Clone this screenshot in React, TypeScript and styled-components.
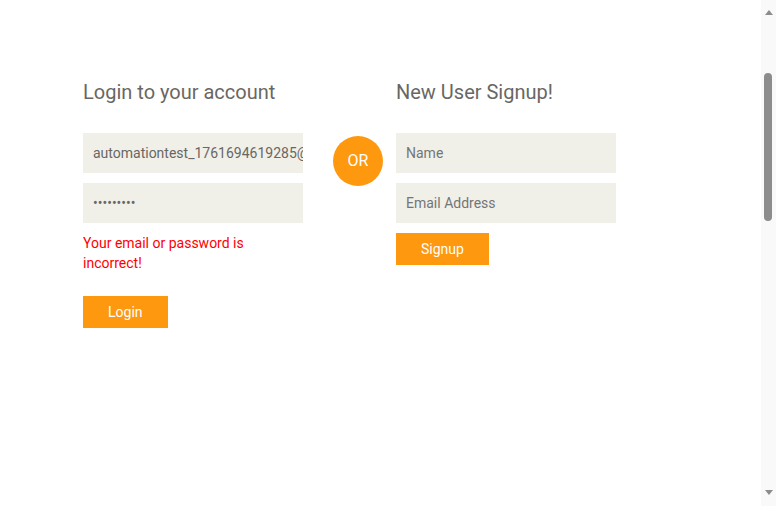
import React from "react";
import styled, { createGlobalStyle } from "styled-components";

const GlobalStyle = createGlobalStyle`
  html, body {
    margin: 0;
    padding: 0;
    background: #ffffff;
    font-family: Roboto, "Liberation Sans", sans-serif;
    overflow: hidden;
  }
  * { box-sizing: border-box; }
`;

const Page = styled.div`
  height: 100vh;
  padding-top: 81px;
`;

const FormSection = styled.section`
  display: flex;
  align-items: flex-start;
  padding-left: 83px;
`;

const FormColumn = styled.div`
  width: 220px;
`;

const Heading = styled.h2`
  margin: 0 0 30px;
  color: #696763;
  font-family: Roboto, "Liberation Sans", sans-serif;
  font-size: 20px;
  font-weight: 400;
  line-height: 22px;
`;

const Form = styled.form`
  display: flex;
  flex-direction: column;
`;

const Input = styled.input`
  display: block;
  width: 100%;
  height: 40px;
  margin: 0 0 10px;
  padding: 0 0 0 10px;
  background: #f0f0e9;
  border: none;
  outline: none;
  color: #696763;
  font-family: Roboto, "Liberation Sans", sans-serif;
  font-size: 14px;
  font-weight: 400;
  &::placeholder {
    color: #757575;
  }
`;

const ErrorText = styled.p`
  margin: 0 0 23px;
  color: #ff0000;
  font-size: 14px;
  line-height: 20px;
`;

const Button = styled.button`
  display: block;
  align-self: flex-start;
  padding: 6px 25px;
  background: #fe980f;
  border: none;
  border-radius: 0;
  color: #ffffff;
  font-family: Roboto, "Liberation Sans", sans-serif;
  font-size: 14px;
  font-weight: 400;
  line-height: 20px;
  cursor: pointer;
`;

const Or = styled.div`
  flex: none;
  width: 50px;
  height: 50px;
  margin: 55px 13px 0 30px;
  border-radius: 50%;
  background: #fe980f;
  color: #ffffff;
  font-size: 16px;
  line-height: 50px;
  text-align: center;
`;

const ScrollTrack = styled.div`
  position: fixed;
  top: 0;
  right: 0;
  width: 15px;
  height: 100vh;
  background: #f9f9f9;
  display: flex;
  flex-direction: column;
  justify-content: space-between;
`;

const Arrow = styled.div<{ $down?: boolean }>`
  width: 15px;
  height: 16px;
  display: flex;
  justify-content: center;
  align-items: ${(p) => (p.$down ? "flex-start" : "flex-end")};
  padding: ${(p) => (p.$down ? "0" : "0 0 1px")};
`;

const Thumb = styled.div`
  position: absolute;
  top: 73px;
  left: 3px;
  width: 8px;
  height: 148px;
  border-radius: 4px;
  background: #8c8c8c;
`;

export default function App() {
  return (
    <>
      <GlobalStyle />
      <Page>
        <FormSection>
          <FormColumn>
            <Heading>Login to your account</Heading>
            <Form onSubmit={(e) => e.preventDefault()}>
              <Input
                type="email"
                defaultValue="automationtest_1761694619285@gmail.com"
                placeholder="Email Address"
              />
              <Input type="password" defaultValue="password1" placeholder="Password" />
              <ErrorText>Your email or password is incorrect!</ErrorText>
              <Button type="submit">Login</Button>
            </Form>
          </FormColumn>
          <Or>OR</Or>
          <FormColumn>
            <Heading>New User Signup!</Heading>
            <Form onSubmit={(e) => e.preventDefault()}>
              <Input type="text" placeholder="Name" />
              <Input type="email" placeholder="Email Address" />
              <Button type="submit">Signup</Button>
            </Form>
          </FormColumn>
        </FormSection>
      </Page>
      <ScrollTrack aria-hidden="true">
        <Arrow>
          <svg width="8" height="5" viewBox="0 0 8 5">
            <polygon points="4,0 8,5 0,5" fill="#8c8c8c" />
          </svg>
        </Arrow>
        <Thumb />
        <Arrow $down>
          <svg width="8" height="5" viewBox="0 0 8 5">
            <polygon points="0,0 8,0 4,5" fill="#8c8c8c" />
          </svg>
        </Arrow>
      </ScrollTrack>
    </>
  );
}
